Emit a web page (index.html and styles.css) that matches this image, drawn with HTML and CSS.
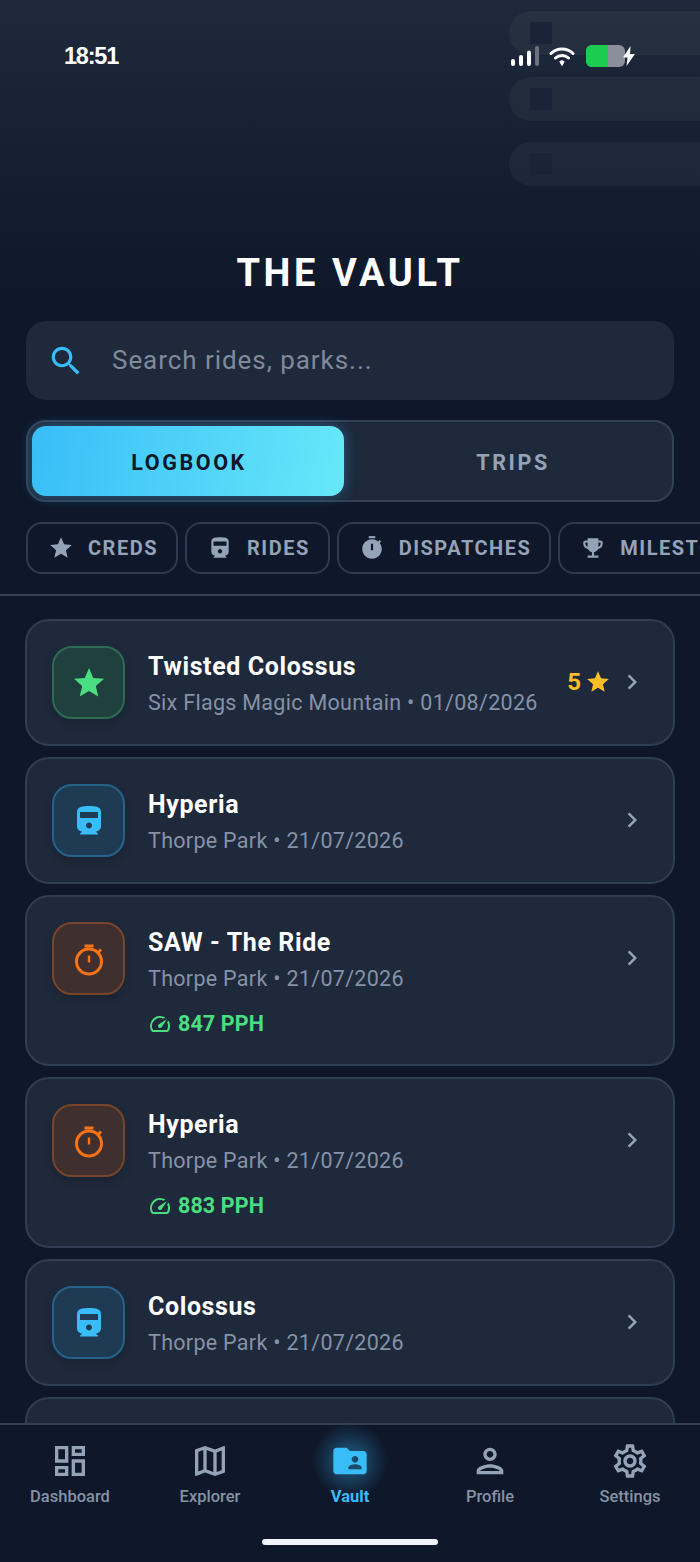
FILE: index.html
```html
<!DOCTYPE html>
<html lang="en">
<head>
<meta charset="utf-8">
<title>The Vault</title>
<link rel="stylesheet" href="styles.css">
</head>
<body>
<svg class="defs" width="0" height="0" aria-hidden="true">
  <symbol id="i-star" viewBox="0 0 24 24"><path d="M12 17.27L18.18 21l-1.64-7.03L22 9.24l-7.19-.61L12 2 9.19 8.63 2 9.24l5.46 4.73L5.82 21z"/></symbol>
  <symbol id="i-train" viewBox="0 0 24 24"><path d="M12 2c-4 0-8 .5-8 4v9.5C4 17.43 5.57 19 7.5 19L6 20.5v.5h12v-.5L16.5 19c1.93 0 3.5-1.57 3.5-3.5V6c0-3.5-3.58-4-8-4zm0 15c-1.1 0-2-.9-2-2s.9-2 2-2 2 .9 2 2-.9 2-2 2zm6-7H6V6h12v4z"/></symbol>
  <symbol id="i-timer" viewBox="0 0 24 24"><path d="M9 1h6v2H9z"/><path d="M19.03 7.39l1.42-1.42c-.43-.51-.9-.99-1.41-1.41l-1.42 1.42C16.07 4.74 14.12 4 12 4c-4.97 0-9 4.03-9 9s4.02 9 9 9 9-4.03 9-9c0-2.12-.74-4.07-1.97-5.61zM13 14h-2V8h2v6z"/></symbol>
  <symbol id="i-timer-o" viewBox="0 0 36 36"><g fill="none" stroke="#f97316"><circle cx="18" cy="20.500" r="12.500" stroke-width="3"/><path d="M13.500 5h9" stroke-width="3"/><path d="M18 14.500v7" stroke-width="2.400"/><path d="M27 11.500l3-3" stroke-width="3"/></g></symbol>
  <symbol id="i-trophy" viewBox="0 0 24 24"><path d="M19 5h-2V3H7v2H5c-1.1 0-2 .9-2 2v1c0 2.55 1.92 4.63 4.39 4.94.63 1.5 1.98 2.63 3.61 2.96V19H7v2h10v-2h-4v-3.1c1.63-.33 2.98-1.46 3.61-2.96C19.08 12.63 21 10.55 21 8V7c0-1.1-.9-2-2-2zM5 8V7h2v3.82C5.84 10.4 5 9.3 5 8zm14 0c0 1.3-.84 2.4-2 2.82V7h2v1z"/></symbol>
  <symbol id="i-chevron" viewBox="0 0 24 24"><path d="M10 6L8.59 7.41 13.17 12l-4.58 4.59L10 18l6-6z"/></symbol>
  <symbol id="i-speed" viewBox="0 0 24 24"><path d="M20.38 8.57l-1.23 1.85a8 8 0 0 1-.22 7.58H5.07A8 8 0 0 1 15.58 6.85l1.85-1.23A10 10 0 0 0 3.35 19a2 2 0 0 0 1.72 1h13.85a2 2 0 0 0 1.74-1 10 10 0 0 0-.27-10.44z"/><path d="M10.59 15.41a2 2 0 0 0 2.83 0l5.66-8.49-8.49 5.66a2 2 0 0 0 0 2.83z"/></symbol>
  <symbol id="i-search" viewBox="0 0 24 24"><path d="M15.500 14h-.79l-.28-.27C15.410 12.590 16 11.110 16 9.500 16 5.910 13.090 3 9.500 3S3 5.910 3 9.500 5.910 16 9.500 16c1.610 0 3.090-.59 4.230-1.570l.27.28v.79l5 4.990L20.490 19l-4.990-5zm-6 0C7.010 14 5 11.990 5 9.500S7.010 5 9.500 5 14 7.010 14 9.500 11.990 14 9.500 14z"/></symbol>
</svg>

<div class="screen">
  <div class="deco" aria-hidden="true">
    <div class="deco-pill"><span class="deco-square"></span></div>
    <div class="deco-pill"><span class="deco-square"></span></div>
    <div class="deco-pill"><span class="deco-square"></span></div>
  </div>

  <header class="header">
    <div class="status">
      <span class="clock">18:51</span>
      <div class="status-icons">
        <svg class="sig" viewBox="0 0 28 20" width="28" height="20"><rect x="0" y="13" width="4" height="7" rx="2" fill="#fff"/><rect x="8" y="9" width="4" height="11" rx="2" fill="#fff"/><rect x="16" y="4.500" width="4" height="15.500" rx="2" fill="#fff"/><rect x="24" y="0" width="4" height="20" rx="2" fill="#6b7280"/></svg>
        <svg class="wifi" viewBox="0 0 26 22" width="26" height="22"><path d="M2 8.500a16 16 0 0 1 22 0M6.500 13a9.500 9.500 0 0 1 13 0" fill="none" stroke="#fff" stroke-width="3" stroke-linecap="round"/><path d="M10.800 16.600a3.400 3.400 0 0 1 4.400 0L13 20.500z" fill="#fff" stroke="#fff" stroke-linejoin="round"/></svg>
        <div class="battery"><div class="battery-fill"></div></div>
        <svg class="bolt" viewBox="0 0 12 20" width="14" height="20"><path d="M7.500 0L0 11.500h4.500L3.500 20 12 8H7z" fill="#fff"/></svg>
      </div>
    </div>
    <h1 class="title">THE VAULT</h1>
    <div class="search">
      <svg class="search-icon"><use href="#i-search"/></svg>
      <span class="search-text">Search rides, parks...</span>
    </div>
    <div class="segment">
      <div class="seg-tab seg-active">LOGBOOK</div>
      <div class="seg-tab">TRIPS</div>
    </div>
    <div class="chips">
      <div class="chip"><svg class="chip-icon"><use href="#i-star"/></svg>CREDS</div>
      <div class="chip"><svg class="chip-icon"><use href="#i-train"/></svg>RIDES</div>
      <div class="chip"><svg class="chip-icon"><use href="#i-timer"/></svg>DISPATCHES</div>
      <div class="chip"><svg class="chip-icon"><use href="#i-trophy"/></svg>MILESTONES</div>
    </div>
  </header>

  <main class="list">
    <article class="card">
      <div class="badge badge-green"><svg class="badge-icon"><use href="#i-star"/></svg></div>
      <div class="info">
        <div class="name">Twisted Colossus</div>
        <div class="sub">Six Flags Magic Mountain • 01/08/2026</div>
      </div>
      <div class="rating">5<svg class="rating-star"><use href="#i-star"/></svg></div>
      <svg class="chev chev-tight"><use href="#i-chevron"/></svg>
    </article>
    <article class="card">
      <div class="badge badge-blue"><svg class="badge-icon"><use href="#i-train"/></svg></div>
      <div class="info">
        <div class="name">Hyperia</div>
        <div class="sub">Thorpe Park • 21/07/2026</div>
      </div>
      <svg class="chev"><use href="#i-chevron"/></svg>
    </article>
    <article class="card">
      <div class="badge badge-orange"><svg class="badge-icon"><use href="#i-timer-o"/></svg></div>
      <div class="info">
        <div class="name">SAW - The Ride</div>
        <div class="sub">Thorpe Park • 21/07/2026</div>
        <div class="pph"><svg class="pph-icon"><use href="#i-speed"/></svg>847 PPH</div>
      </div>
      <svg class="chev"><use href="#i-chevron"/></svg>
    </article>
    <article class="card">
      <div class="badge badge-orange"><svg class="badge-icon"><use href="#i-timer-o"/></svg></div>
      <div class="info">
        <div class="name">Hyperia</div>
        <div class="sub">Thorpe Park • 21/07/2026</div>
        <div class="pph"><svg class="pph-icon"><use href="#i-speed"/></svg>883 PPH</div>
      </div>
      <svg class="chev"><use href="#i-chevron"/></svg>
    </article>
    <article class="card">
      <div class="badge badge-blue"><svg class="badge-icon"><use href="#i-train"/></svg></div>
      <div class="info">
        <div class="name">Colossus</div>
        <div class="sub">Thorpe Park • 21/07/2026</div>
      </div>
      <svg class="chev"><use href="#i-chevron"/></svg>
    </article>
    <article class="card card-peek"></article>
  </main>

  <nav class="nav">
    <div class="nav-items">
      <div class="nav-item">
        <svg class="nav-icon" viewBox="0 0 24 24"><path d="M19 5v2h-4V5h4M9 5v6H5V5h4m10 8v6h-4v-6h4M9 17v2H5v-2h4M21 3h-8v6h8V3zM11 3H3v10h8V3zm10 8h-8v10h8V11zm-10 4H3v6h8v-6z"/></svg>
        <span>Dashboard</span>
      </div>
      <div class="nav-item">
        <svg class="nav-icon" viewBox="0 0 24 24"><path d="M20.500 3l-.16.03L15 5.100 9 3 3.360 4.900c-.21.07-.36.25-.36.48V20.500c0 .28.22.5.5.5l.16-.03L9 18.900l6 2.100 5.640-1.900c.21-.07.36-.25.36-.48V3.500c0-.28-.22-.5-.5-.5zM10 5.470l4 1.400v11.660l-4-1.400V5.470zm-5 .99l3-1.010v11.700l-3 1.160V6.460zm14 11.080l-3 1.010V6.860l3-1.160v11.840z"/></svg>
        <span>Explorer</span>
      </div>
      <div class="nav-item nav-active">
        <div class="glow"></div>
        <svg class="nav-icon" viewBox="0 0 24 24"><path d="M20 6h-8l-2-2H4c-1.100 0-1.990.9-1.990 2L2 18c0 1.100.9 2 2 2h16c1.100 0 2-.9 2-2V8c0-1.100-.9-2-2-2zm-5 3c1.100 0 2 .9 2 2s-.9 2-2 2-2-.9-2-2 .9-2 2-2zm4 8h-8v-1c0-1.330 2.670-2 4-2s4 .67 4 2v1z"/></svg>
        <span>Vault</span>
      </div>
      <div class="nav-item">
        <svg class="nav-icon" viewBox="0 0 24 24"><path d="M12 6c1.100 0 2 .9 2 2s-.9 2-2 2-2-.9-2-2 .9-2 2-2m0 10c2.700 0 5.800 1.290 6 2H6c.23-.72 3.310-2 6-2m0-12C9.790 4 8 5.790 8 8s1.790 4 4 4 4-1.790 4-4-1.790-4-4-4zm0 10c-2.670 0-8 1.340-8 4v2h16v-2c0-2.660-5.330-4-8-4z"/></svg>
        <span>Profile</span>
      </div>
      <div class="nav-item">
        <svg class="nav-icon" viewBox="0 0 24 24"><path d="M19.430 12.980c.04-.32.07-.64.07-.98 0-.34-.03-.66-.07-.98l2.110-1.650c.19-.15.24-.42.12-.64l-2-3.460c-.09-.16-.26-.25-.44-.25-.06 0-.12.01-.17.03l-2.490 1c-.52-.4-1.080-.73-1.690-.98l-.38-2.650C14.460 2.180 14.250 2 14 2h-4c-.25 0-.46.18-.49.42l-.38 2.650c-.61.25-1.170.59-1.690.98l-2.490-1c-.06-.02-.12-.03-.18-.03-.17 0-.34.09-.43.25l-2 3.460c-.13.22-.07.49.12.64l2.110 1.650c-.04.32-.07.65-.07.98 0 .33.03.66.07.98l-2.110 1.650c-.19.15-.24.42-.12.64l2 3.460c.09.16.26.25.44.25.06 0 .12-.01.17-.03l2.490-1c.52.4 1.080.73 1.690.98l.38 2.650c.03.24.24.42.49.42h4c.25 0 .46-.18.49-.42l.38-2.650c.61-.25 1.170-.59 1.690-.98l2.490 1c.06.02.12.03.18.03.17 0 .34-.09.43-.25l2-3.460c.12-.22.07-.49-.12-.64l-2.110-1.650zm-1.980-1.710c.04.31.05.52.05.73 0 .21-.02.43-.05.73l-.14 1.130.89.7 1.080.84-.7 1.210-1.270-.51-1.040-.42-.9.68c-.43.32-.84.56-1.250.73l-1.060.43-.16 1.130-.2 1.350h-1.400l-.19-1.350-.16-1.130-1.060-.43c-.43-.18-.83-.41-1.230-.71l-.91-.7-1.060.43-1.270.51-.7-1.210 1.080-.84.89-.7-.14-1.130c-.03-.31-.05-.54-.05-.74s.02-.43.05-.73l.14-1.130-.89-.7-1.080-.84.7-1.210 1.270.51 1.040.42.9-.68c.43-.32.84-.56 1.250-.73l1.060-.43.16-1.130.2-1.350h1.390l.19 1.350.16 1.130 1.060.43c.43.18.83.41 1.230.71l.91.7 1.060-.43 1.270-.51.7 1.210-1.070.85-.89.7.14 1.130zM12 8c-2.210 0-4 1.790-4 4s1.790 4 4 4 4-1.790 4-4-1.790-4-4-4zm0 6c-1.100 0-2-.9-2-2s.9-2 2-2 2 .9 2 2-.9 2-2 2z"/></svg>
        <span>Settings</span>
      </div>
    </div>
    <div class="home-bar"></div>
  </nav>
</div>
</body>
</html>
```

FILE: styles.css
```css
* { box-sizing: border-box; }
html, body { margin: 0; padding: 0; }
body {
  background: #0f172a;
  font-family: Roboto, "Liberation Sans", sans-serif;
  color: #fff;
}
.defs { position: absolute; }
.screen {
  position: relative;
  width: 700px;
  height: 1562px;
  display: flex;
  flex-direction: column;
  overflow: hidden;
  background: linear-gradient(180deg, #1e293b 0, #0f172a 300px);
}
.deco {
  position: absolute;
  top: 11px;
  left: 509px;
  width: 191px;
  display: flex;
  flex-direction: column;
  gap: 21.500px;
}
.deco-pill {
  height: 44px;
  border-radius: 22px 0 0 22px;
  background: rgba(255, 255, 255, 0.04);
  padding: 11px 0 0 21px;
}
.deco-square {
  display: block;
  width: 22px;
  height: 22px;
  background: #1a2438;
}
.header {
  position: relative;
  padding: 0 26px;
  flex: none;
}
.status {
  height: 112px;
  display: flex;
  justify-content: space-between;
  align-items: center;
  padding: 0 38px;
}
.clock {
  font-family: "Liberation Sans", sans-serif;
  font-weight: 700;
  font-size: 23.500px;
  letter-spacing: -1.200px;
}
.status-icons { display: flex; align-items: center; }
.sig { margin-right: 10px; }
.wifi { margin-right: 11px; }
.battery {
  width: 39px;
  height: 22px;
  border-radius: 6px;
  background: #8a8f9b;
  overflow: hidden;
}
.battery-fill { width: 22px; height: 100%; background: #1ccc4f; }
.bolt { margin-left: -3px; }
.title {
  margin: 139px 0 0;
  height: 44px;
  line-height: 44px;
  text-align: center;
  font-size: 38px;
  font-weight: 700;
  letter-spacing: 3.600px;
}
.search {
  margin-top: 26px;
  height: 79px;
  background: #1e293b;
  border-radius: 20px;
  display: flex;
  align-items: center;
  padding-left: 21px;
}
.search-icon { width: 38px; height: 38px; fill: #38bdf8; flex: none; }
.search-text {
  margin-left: 27px;
  padding-bottom: 2px;
  font-size: 26px;
  letter-spacing: 0.950px;
  color: #808a9a;
}
.segment {
  margin-top: 20px;
  height: 82px;
  padding: 4px;
  background: #1e293b;
  border: 2px solid #334155;
  border-radius: 20px;
  display: grid;
  grid-template-columns: 1fr 1fr;
  gap: 12px;
}
.seg-tab {
  display: flex;
  align-items: center;
  justify-content: center;
  padding: 2px 0 0 2px;
  font-size: 21.500px;
  font-weight: 700;
  letter-spacing: 2.600px;
  color: #94a3b8;
  border-radius: 14px;
}
.seg-active {
  background: linear-gradient(100deg, #38bdf8, #67e8f9);
  color: #0f172a;
  box-shadow: 0 0 14px rgba(56, 189, 248, 0.35);
}
.chips {
  margin: 20px -26px 0 0;
  padding-bottom: 20px;
  display: flex;
  gap: 7px;
  overflow: hidden;
}
.chip {
  flex: none;
  height: 52px;
  padding: 0 18px 0 20px;
  border: 2px solid #2e3b50;
  border-radius: 16px;
  display: flex;
  align-items: center;
  gap: 14px;
  font-size: 20px;
  font-weight: 700;
  letter-spacing: 1.500px;
  color: #94a3b8;
}
.chip-icon { width: 26px; height: 26px; fill: #94a3b8; flex: none; }
.list {
  flex: 1;
  min-height: 0;
  overflow: hidden;
  border-top: 2px solid #334155;
  padding: 23px 25px 0;
  display: flex;
  flex-direction: column;
  gap: 11px;
}
.card {
  flex: none;
  display: flex;
  align-items: flex-start;
  padding: 25px;
  background: #1e293b;
  border: 2px solid #303d52;
  border-radius: 24px;
}
.card-peek { height: 127px; }
.badge {
  flex: none;
  width: 73px;
  height: 73px;
  border-radius: 20px;
  border: 2px solid;
  display: flex;
  align-items: center;
  justify-content: center;
  box-shadow: 0 4px 8px rgba(0, 0, 0, 0.15);
}
.badge-icon { width: 36px; height: 36px; }
.badge-green { background: #20403f; border-color: #2d6b52; }
.badge-green .badge-icon { fill: #4ade80; }
.badge-blue { background: #1f3b54; border-color: #26638a; }
.badge-blue .badge-icon { fill: #38bdf8; }
.badge-orange { background: #3f302f; border-color: #78452a; }
.info { flex: 1; min-width: 0; margin: 3px 0 0 23px; }
.name {
  font-size: 25px;
  font-weight: 700;
  line-height: 36px;
  letter-spacing: 0.600px;
}
.sub {
  font-size: 21.500px;
  line-height: 30px;
  letter-spacing: 0.300px;
  color: #8592a8;
  margin-top: 3px;
}
.pph {
  display: flex;
  align-items: center;
  gap: 6px;
  margin-top: 15px;
  font-size: 21.500px;
  line-height: 30px;
  font-weight: 700;
  letter-spacing: 0.100px;
  color: #4ade80;
}
.pph-icon { width: 24px; height: 24px; fill: #4ade80; flex: none; }
.rating {
  display: flex;
  align-items: center;
  gap: 4px;
  margin-top: 22px;
  font-size: 24px;
  font-weight: 700;
  line-height: 28px;
  color: #fbbf24;
}
.rating-star { width: 26px; height: 26px; fill: #fbbf24; }
.chev { width: 30px; height: 30px; fill: #94a3b8; flex: none; margin: 21px 1px 0 8px; }
.chev-tight { margin-left: 6px; }
.nav {
  flex: none;
  position: relative;
  height: 139px;
  background: #0f172a;
  border-top: 2px solid #334155;
}
.nav-items { display: grid; grid-template-columns: repeat(5, 140px); padding-top: 16px; }
.nav-item {
  position: relative;
  display: flex;
  flex-direction: column;
  align-items: center;
  font-size: 16.500px;
  font-weight: 500;
  line-height: 24px;
  color: #8492a6;
}
.nav-icon { position: relative; width: 40px; height: 40px; fill: #94a3b8; margin-bottom: 4px; }
.nav-item span { position: relative; }
.nav-active { color: #38bdf8; font-weight: 700; }
.nav-active .nav-icon { fill: #38bdf8; }
.glow {
  position: absolute;
  top: -20px;
  left: 30px;
  width: 80px;
  height: 80px;
  border-radius: 50%;
  background: radial-gradient(circle, rgba(56, 189, 248, 0.35) 0, rgba(56, 189, 248, 0.28) 25%, rgba(56, 189, 248, 0.1) 50%, rgba(56, 189, 248, 0) 68%);
}
.home-bar {
  position: absolute;
  left: 262px;
  top: 114px;
  width: 176px;
  height: 6px;
  border-radius: 3px;
  background: #f1f5f9;
}
```
